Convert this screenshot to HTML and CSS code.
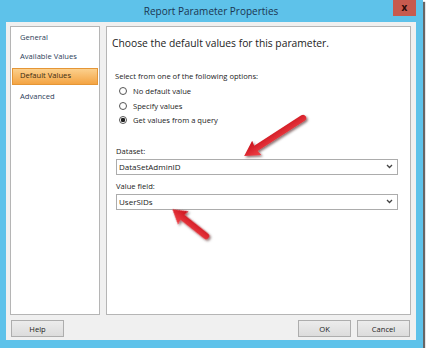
FILE: index.html
```html
<!DOCTYPE html>
<html lang="en">
<head>
  <meta charset="UTF-8">
  <meta name="viewport" content="width=device-width, initial-scale=1.0">
  <title>Report Parameter Properties</title>
  <link rel="stylesheet" href="styles.css">
</head>
<body>
  <div class="window">
    <div class="titlebar">
      <span></span>
      <span class="title">Report Parameter Properties</span>
      <span class="close">x</span>
    </div>

    <div class="client">
      <div class="panes">
        <ul class="nav">
          <li>General</li>
          <li>Available Values</li>
          <li class="active">Default Values</li>
          <li>Advanced</li>
        </ul>

        <div class="page">
          <h1>Choose the default values for this parameter.</h1>

          <div class="options">
            <p class="hint">Select from one of the following options:</p>
            <label class="radio"><span class="dot"></span>No default value</label>
            <label class="radio"><span class="dot"></span>Specify values</label>
            <label class="radio"><span class="dot checked"></span>Get values from a query</label>
          </div>

          <p class="field-label">Dataset:</p>
          <div class="combo">
            <span>DataSetAdminID</span>
            <svg class="chevron" width="7" height="5" viewBox="0 0 7 5"><path d="M1 1 L3.5 3.5 L6 1" fill="none" stroke="#444" stroke-width="1.3"/></svg>
          </div>

          <p class="field-label">Value field:</p>
          <div class="combo">
            <span>UserSIDs</span>
            <svg class="chevron" width="7" height="5" viewBox="0 0 7 5"><path d="M1 1 L3.5 3.5 L6 1" fill="none" stroke="#444" stroke-width="1.3"/></svg>
          </div>
        </div>
      </div>

      <div class="buttons">
        <button>Help</button>
        <span class="spacer"></span>
        <button>OK</button>
        <button>Cancel</button>
      </div>
    </div>

    <!-- red callout arrows drawn over the dialog -->
    <svg class="arrows" width="426" height="352" viewBox="0 0 426 352">
      <defs>
        <filter id="shadow" x="-30%" y="-30%" width="160%" height="160%">
          <feDropShadow dx="1.5" dy="1.5" stdDeviation="1" flood-color="#300" flood-opacity="0.55"/>
        </filter>
        <linearGradient id="red" x1="0" y1="0" x2="0" y2="1">
          <stop offset="0" stop-color="#f2444a"/>
          <stop offset="1" stop-color="#c8101a"/>
        </linearGradient>
      </defs>
      <g filter="url(#shadow)" fill="url(#red)">
        <g transform="translate(303 118) rotate(147.2)">
          <path d="M0 -3.2 L56 -3.2 L55 -8.5 L70 0 L55 8.5 L56 3.2 L0 3.2 A3.2 3.2 0 0 1 0 -3.2 Z"/>
        </g>
        <g transform="translate(206 236) rotate(-141.5)">
          <path d="M0 -3.2 L30 -3.2 L29 -8.5 L43 0 L29 8.5 L30 3.2 L0 3.2 A3.2 3.2 0 0 1 0 -3.2 Z"/>
        </g>
      </g>
    </svg>
  </div>
</body>
</html>
```

FILE: styles.css
```css
body {
  margin: 0;
  background-color: #fff;
  font-family: "Open Sans", "Noto Sans", sans-serif;
  color: #222;
}

.window {
  position: relative;
  width: 423px;
  height: 348px;
  box-sizing: border-box;
  padding: 0 7px 8px 6px;
  background-color: #5ec2ea;
  box-shadow: 2px 2px 1px rgba(0, 0, 0, 0.6);
  display: flex;
  flex-direction: column;
}

.titlebar {
  height: 22px;
  display: grid;
  grid-template-columns: 1fr auto 1fr;
  align-items: start;
}

.title {
  font-size: 10px;
  line-height: 22px;
  color: #1b3550;
}

.close {
  justify-self: end;
  width: 23px;
  height: 16px;
  background-color: #c75a4e;
  color: #2a0a08;
  font-size: 10px;
  font-weight: bold;
  line-height: 15px;
  text-align: center;
}

.client {
  flex: 1;
  background-color: #f0f0f0;
  padding: 4px 5px 3px 4px;
  display: flex;
  flex-direction: column;
}

.panes {
  flex: 1;
  display: flex;
  gap: 6px;
}

.nav {
  width: 90px;
  box-sizing: border-box;
  margin: 0;
  padding: 3px 1px 0;
  list-style: none;
  background: #fff;
  border: 1px solid #b5b5b5;
  display: flex;
  flex-direction: column;
  gap: 4px;
}

.nav li {
  height: 15px;
  line-height: 15px;
  padding-left: 8px;
  font-size: 7.6px;
  color: #2c3e58;
}

.nav li.active {
  background: linear-gradient(#fbd08d, #f4a443);
  border: 1px solid #e59636;
  line-height: 13px;
  padding-left: 7px;
  color: #3a2a10;
}

.page {
  flex: 1;
  background: #fff;
  border: 1px solid #b5b5b5;
  padding: 9px 12px 0 5px;
}

h1 {
  margin: 0;
  font-size: 10.3px;
  font-weight: normal;
  line-height: 14px;
  color: #222;
}

.options {
  margin: 20px 0 0 3px;
}

.hint {
  margin: 0 0 2px;
  font-size: 7.6px;
  line-height: 12px;
}

.radio {
  display: flex;
  align-items: center;
  height: 14.5px;
  font-size: 7.6px;
}

.dot {
  width: 8px;
  height: 8px;
  box-sizing: border-box;
  margin: 0 6px 0 4px;
  border: 1px solid #555;
  border-radius: 50%;
  background: #fff;
}

.dot.checked {
  background: radial-gradient(circle, #222 0 2px, #fff 2.4px);
}

.field-label {
  margin: 17px 0 2px 4px;
  font-size: 7.6px;
  line-height: 12px;
}

.field-label + .combo + .field-label {
  margin-top: 5px;
}

.combo {
  margin-left: 4px;
  height: 16px;
  box-sizing: border-box;
  border: 1px solid #acacac;
  background: #fff;
  display: flex;
  align-items: center;
  justify-content: space-between;
  padding: 0 4px 0 2px;
  font-size: 8px;
}

.buttons {
  display: flex;
  gap: 6px;
  margin-top: 5px;
  padding: 0 1px;
}

.spacer {
  flex: 1;
}

button {
  width: 53px;
  height: 17px;
  padding: 0;
  border: 1px solid #adadad;
  background: linear-gradient(#ececec, #dcdcdc);
  font-family: inherit;
  font-size: 7.6px;
  color: #222;
}

.arrows {
  position: absolute;
  left: 0;
  top: 0;
  pointer-events: none;
}
```
